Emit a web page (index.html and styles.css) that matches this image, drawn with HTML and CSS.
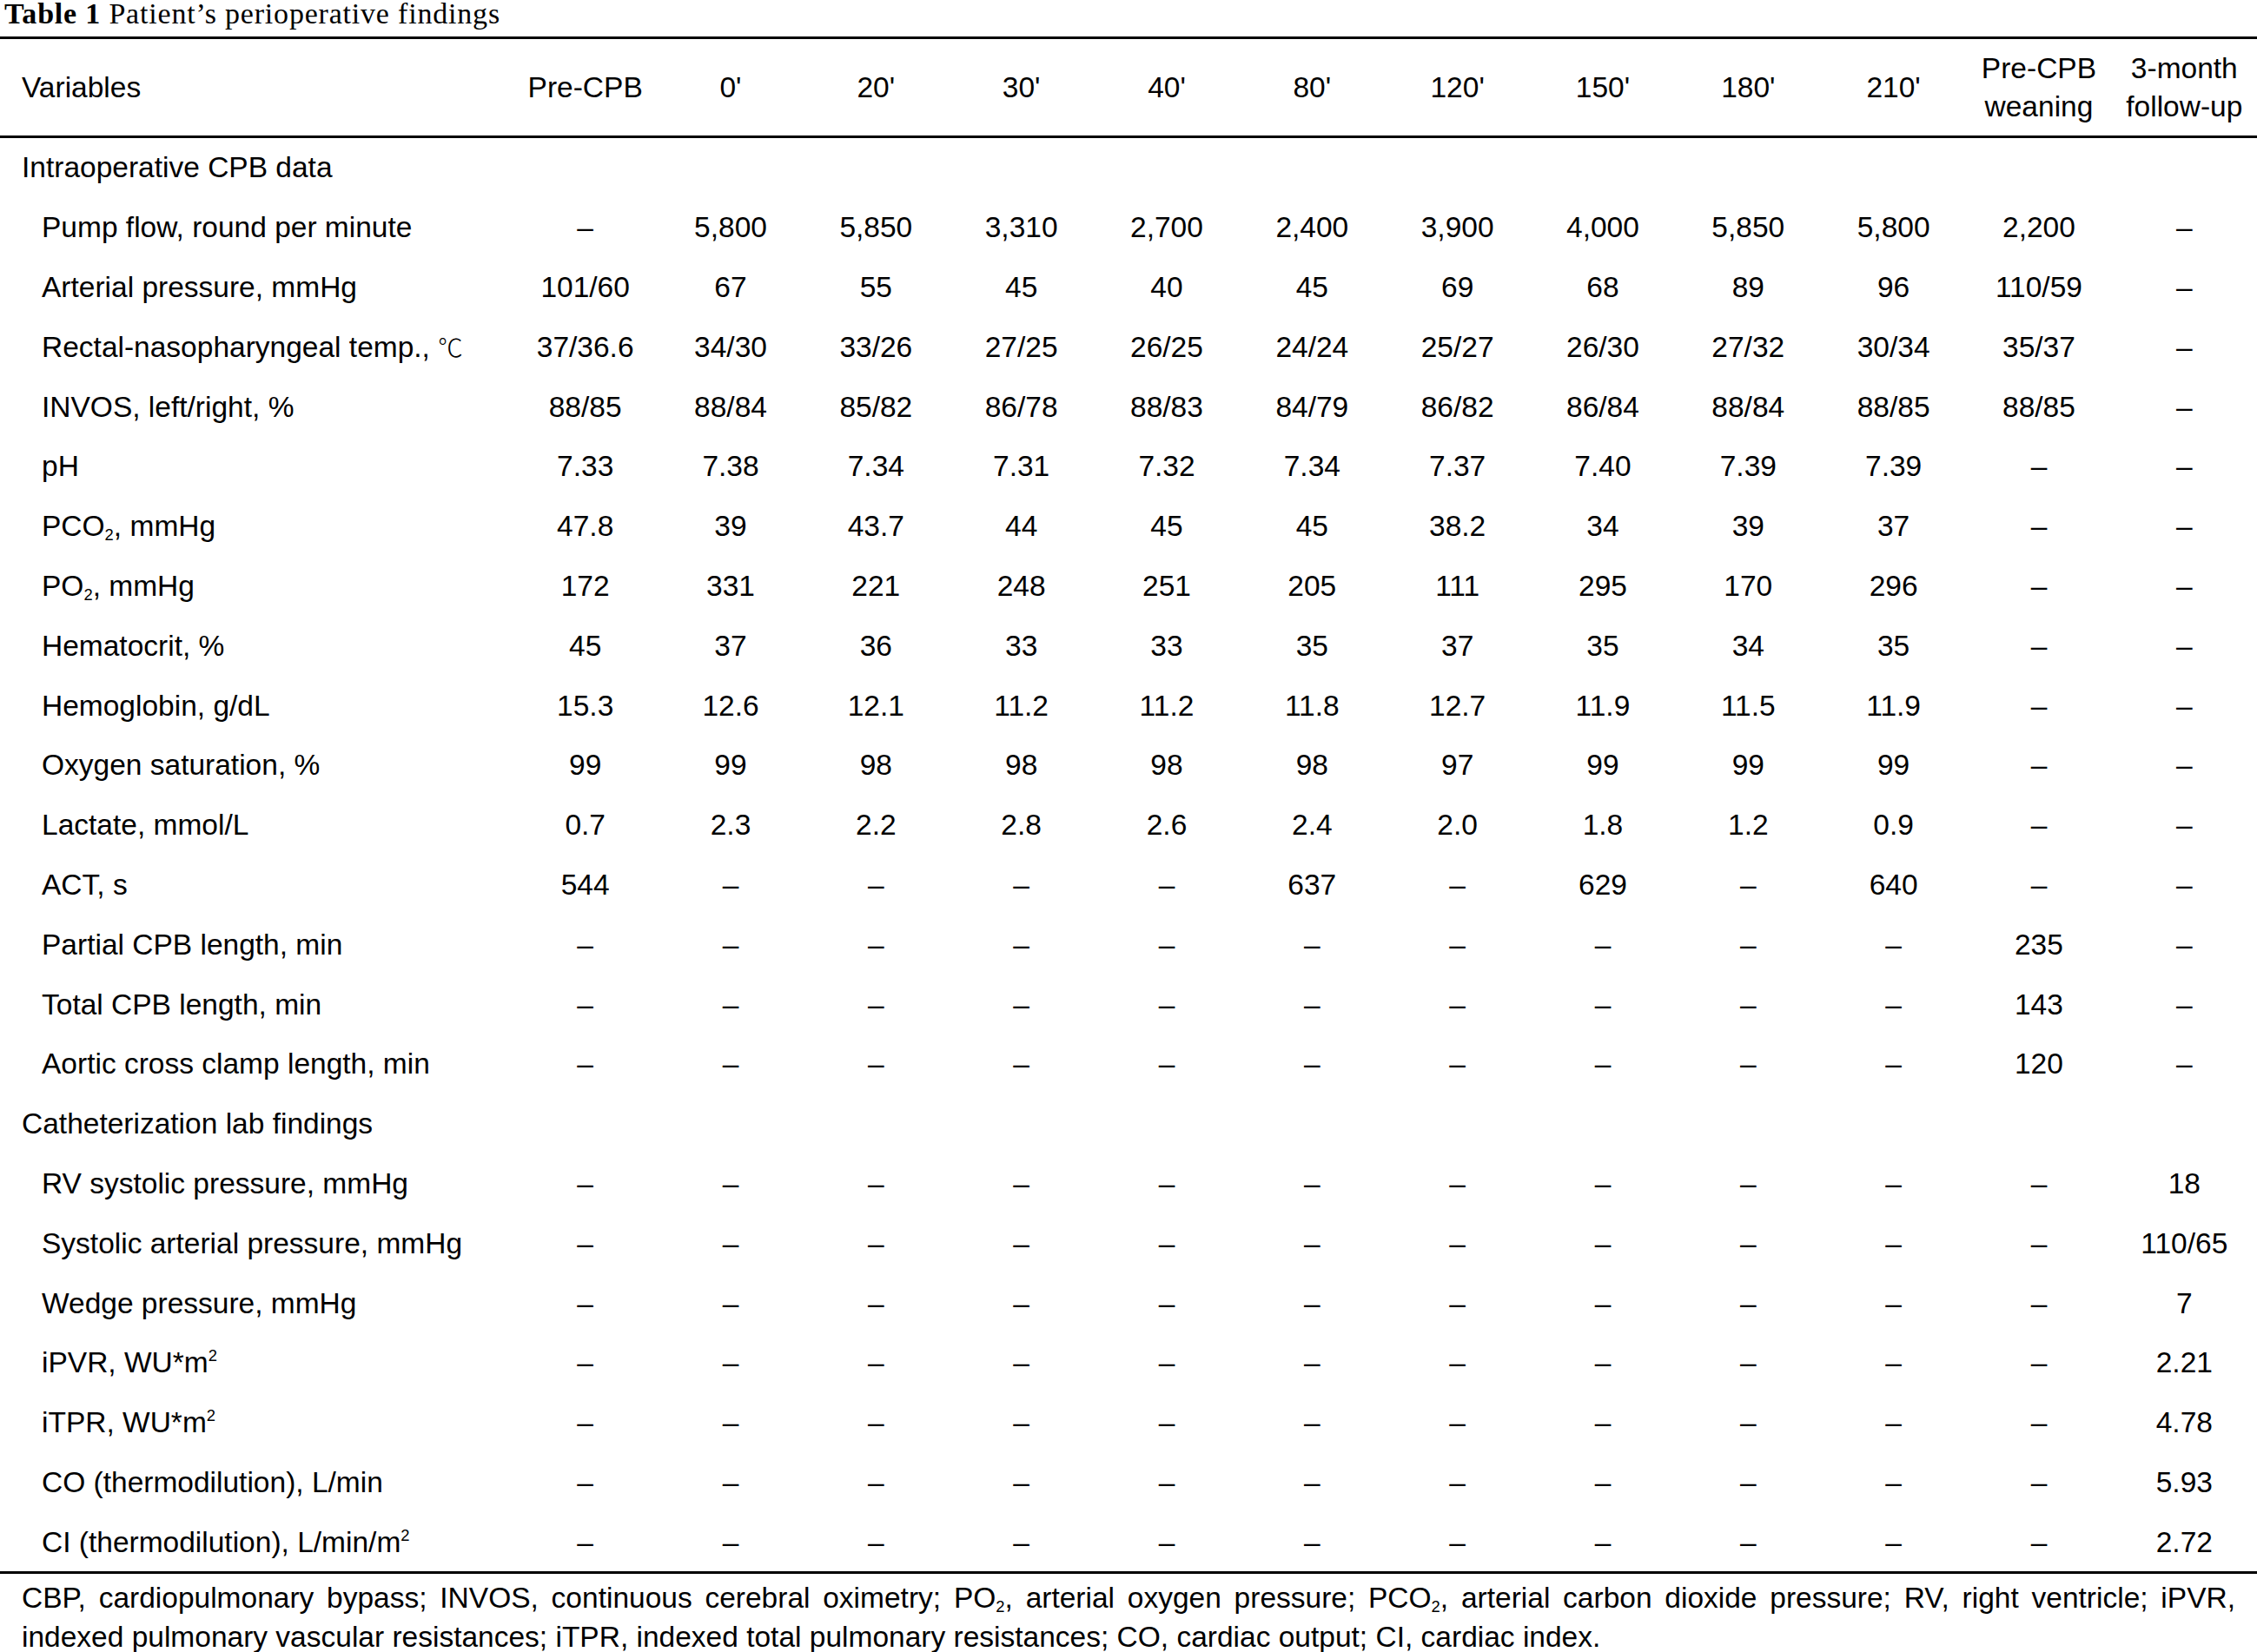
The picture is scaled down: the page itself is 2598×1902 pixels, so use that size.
FILE: index.html
```html
<!DOCTYPE html>
<html>
<head>
<meta charset="utf-8">
<title>Table 1 Patient's perioperative findings</title>
<link rel="stylesheet" href="styles.css">
</head>
<body>
<div class="title"><b>Table 1</b> Patient’s perioperative findings</div>
<table class="tbl">
<colgroup><col class="c-label"><col><col><col><col><col><col><col><col><col><col><col><col></colgroup>
<thead>
<tr><th class="lbl">Variables</th><th>Pre-CPB</th><th>0'</th><th>20'</th><th>30'</th><th>40'</th><th>80'</th><th>120'</th><th>150'</th><th>180'</th><th>210'</th><th>Pre-CPB<br>weaning</th><th>3-month<br>follow-up</th></tr>
</thead>
<tbody>
<tr><td class="sec" colspan="13">Intraoperative CPB data</td></tr>
<tr><td class="lbl">Pump flow, round per minute</td><td>–</td><td>5,800</td><td>5,850</td><td>3,310</td><td>2,700</td><td>2,400</td><td>3,900</td><td>4,000</td><td>5,850</td><td>5,800</td><td>2,200</td><td>–</td></tr>
<tr><td class="lbl">Arterial pressure, mmHg</td><td>101/60</td><td>67</td><td>55</td><td>45</td><td>40</td><td>45</td><td>69</td><td>68</td><td>89</td><td>96</td><td>110/59</td><td>–</td></tr>
<tr><td class="lbl">Rectal-nasopharyngeal temp., <span class="deg">℃</span></td><td>37/36.6</td><td>34/30</td><td>33/26</td><td>27/25</td><td>26/25</td><td>24/24</td><td>25/27</td><td>26/30</td><td>27/32</td><td>30/34</td><td>35/37</td><td>–</td></tr>
<tr><td class="lbl">INVOS, left/right, %</td><td>88/85</td><td>88/84</td><td>85/82</td><td>86/78</td><td>88/83</td><td>84/79</td><td>86/82</td><td>86/84</td><td>88/84</td><td>88/85</td><td>88/85</td><td>–</td></tr>
<tr><td class="lbl">pH</td><td>7.33</td><td>7.38</td><td>7.34</td><td>7.31</td><td>7.32</td><td>7.34</td><td>7.37</td><td>7.40</td><td>7.39</td><td>7.39</td><td>–</td><td>–</td></tr>
<tr><td class="lbl">PCO<sub>2</sub>, mmHg</td><td>47.8</td><td>39</td><td>43.7</td><td>44</td><td>45</td><td>45</td><td>38.2</td><td>34</td><td>39</td><td>37</td><td>–</td><td>–</td></tr>
<tr><td class="lbl">PO<sub>2</sub>, mmHg</td><td>172</td><td>331</td><td>221</td><td>248</td><td>251</td><td>205</td><td>111</td><td>295</td><td>170</td><td>296</td><td>–</td><td>–</td></tr>
<tr><td class="lbl">Hematocrit, %</td><td>45</td><td>37</td><td>36</td><td>33</td><td>33</td><td>35</td><td>37</td><td>35</td><td>34</td><td>35</td><td>–</td><td>–</td></tr>
<tr><td class="lbl">Hemoglobin, g/dL</td><td>15.3</td><td>12.6</td><td>12.1</td><td>11.2</td><td>11.2</td><td>11.8</td><td>12.7</td><td>11.9</td><td>11.5</td><td>11.9</td><td>–</td><td>–</td></tr>
<tr><td class="lbl">Oxygen saturation, %</td><td>99</td><td>99</td><td>98</td><td>98</td><td>98</td><td>98</td><td>97</td><td>99</td><td>99</td><td>99</td><td>–</td><td>–</td></tr>
<tr><td class="lbl">Lactate, mmol/L</td><td>0.7</td><td>2.3</td><td>2.2</td><td>2.8</td><td>2.6</td><td>2.4</td><td>2.0</td><td>1.8</td><td>1.2</td><td>0.9</td><td>–</td><td>–</td></tr>
<tr><td class="lbl">ACT, s</td><td>544</td><td>–</td><td>–</td><td>–</td><td>–</td><td>637</td><td>–</td><td>629</td><td>–</td><td>640</td><td>–</td><td>–</td></tr>
<tr><td class="lbl">Partial CPB length, min</td><td>–</td><td>–</td><td>–</td><td>–</td><td>–</td><td>–</td><td>–</td><td>–</td><td>–</td><td>–</td><td>235</td><td>–</td></tr>
<tr><td class="lbl">Total CPB length, min</td><td>–</td><td>–</td><td>–</td><td>–</td><td>–</td><td>–</td><td>–</td><td>–</td><td>–</td><td>–</td><td>143</td><td>–</td></tr>
<tr><td class="lbl">Aortic cross clamp length, min</td><td>–</td><td>–</td><td>–</td><td>–</td><td>–</td><td>–</td><td>–</td><td>–</td><td>–</td><td>–</td><td>120</td><td>–</td></tr>
<tr><td class="sec" colspan="13">Catheterization lab findings</td></tr>
<tr><td class="lbl">RV systolic pressure, mmHg</td><td>–</td><td>–</td><td>–</td><td>–</td><td>–</td><td>–</td><td>–</td><td>–</td><td>–</td><td>–</td><td>–</td><td>18</td></tr>
<tr><td class="lbl">Systolic arterial pressure, mmHg</td><td>–</td><td>–</td><td>–</td><td>–</td><td>–</td><td>–</td><td>–</td><td>–</td><td>–</td><td>–</td><td>–</td><td>110/65</td></tr>
<tr><td class="lbl">Wedge pressure, mmHg</td><td>–</td><td>–</td><td>–</td><td>–</td><td>–</td><td>–</td><td>–</td><td>–</td><td>–</td><td>–</td><td>–</td><td>7</td></tr>
<tr><td class="lbl">iPVR, WU*m<sup>2</sup></td><td>–</td><td>–</td><td>–</td><td>–</td><td>–</td><td>–</td><td>–</td><td>–</td><td>–</td><td>–</td><td>–</td><td>2.21</td></tr>
<tr><td class="lbl">iTPR, WU*m<sup>2</sup></td><td>–</td><td>–</td><td>–</td><td>–</td><td>–</td><td>–</td><td>–</td><td>–</td><td>–</td><td>–</td><td>–</td><td>4.78</td></tr>
<tr><td class="lbl">CO (thermodilution), L/min</td><td>–</td><td>–</td><td>–</td><td>–</td><td>–</td><td>–</td><td>–</td><td>–</td><td>–</td><td>–</td><td>–</td><td>5.93</td></tr>
<tr class="last"><td class="lbl">CI (thermodilution), L/min/m<sup>2</sup></td><td>–</td><td>–</td><td>–</td><td>–</td><td>–</td><td>–</td><td>–</td><td>–</td><td>–</td><td>–</td><td>–</td><td>2.72</td></tr>
</tbody>
</table>
<p class="note"><span class="l1">CBP, cardiopulmonary bypass; INVOS, continuous cerebral oximetry; PO<sub>2</sub>, arterial oxygen pressure; PCO<sub>2</sub>, arterial carbon dioxide pressure; RV, right ventricle; iPVR,</span><span class="l2">indexed pulmonary vascular resistances; iTPR, indexed total pulmonary resistances; CO, cardiac output; CI, cardiac index.</span></p>
</body>
</html>
```

FILE: styles.css
```css
html, body {
  margin: 0;
  padding: 0;
  background: #ffffff;
  overflow: hidden;
}
body {
  width: 2598px;
  color: #000000;
  font-family: "Liberation Sans", Arial, Helvetica, sans-serif;
  font-size: 33.5px;
}
.title {
  font-family: "Liberation Serif", "Times New Roman", serif;
  font-size: 34px;
  line-height: 32px;
  letter-spacing: 0.8px;
  padding-left: 5px;
  height: 32px;
  margin-bottom: 10px;
  white-space: nowrap;
}
.title b {
  font-weight: bold;
}
.tbl {
  width: 2598px;
  table-layout: fixed;
  border-collapse: separate;
  border-spacing: 0;
}
.c-label {
  width: 590px;
}
.tbl th {
  font-weight: normal;
  text-align: center;
  vertical-align: middle;
  line-height: 44px;
  height: 111px;
  padding: 0;
  border-top: 3px solid #000;
  border-bottom: 3px solid #000;
  white-space: nowrap;
}
.tbl th.lbl {
  text-align: left;
  padding-left: 25px;
}
.tbl td {
  height: 68.8px;
  padding: 0;
  line-height: 38px;
  text-align: center;
  vertical-align: middle;
  white-space: nowrap;
}
.tbl td.lbl {
  text-align: left;
  padding-left: 48px;
}
.tbl td.sec {
  text-align: left;
  padding-left: 25px;
}
.tbl tr.last td {
  height: 67px;
  padding-top: 1px;
  border-bottom: 3px solid #000;
}
sub, sup {
  font-size: 0.55em;
  line-height: 0;
  position: relative;
  vertical-align: baseline;
}
sub {
  top: 0.28em;
}
sup {
  top: -0.7em;
}
.deg {
  font-family: "Noto Sans CJK JP", "DejaVu Sans", sans-serif;
  font-weight: 300;
  font-size: 0.85em;
}
.note {
  margin: 5px 0 0 0;
  padding: 0 25px;
  line-height: 45px;
}
.note .l1 {
  display: block;
  text-align: justify;
  text-align-last: justify;
}
.note .l2 {
  display: block;
}
```
